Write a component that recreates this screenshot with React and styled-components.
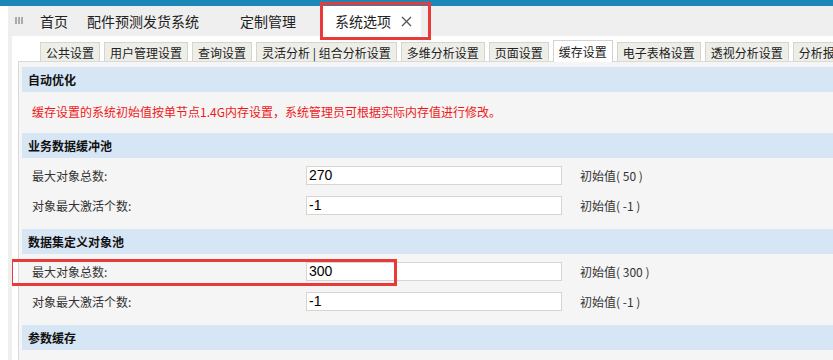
import React from 'react'
import styled, { createGlobalStyle } from 'styled-components'

const Global = createGlobalStyle`
  body {
    margin: 0;
    background: #fff;
    font-family: "Noto Sans CJK SC", "Noto Sans", sans-serif;
  }
`

const Page = styled.div`
  width: 833px;
  height: 360px;
  overflow: hidden;
  background: #fff;
  position: relative;
`

const BlueBar = styled.div`
  height: 6px;
  background: #1b87b7;
`

const Frame = styled.div`
  margin-left: 8px;
  background: #efefef;
  height: 354px;
  display: flex;
  flex-direction: column;
`

const TopTabs = styled.div`
  height: 30px;
  display: flex;
  align-items: stretch;
  flex-shrink: 0;
`

const Grip = styled.div`
  width: 22px;
  display: flex;
  align-items: center;
  justify-content: center;
`

const TopTab = styled.div`
  position: relative;
  width: ${p => p.$w}px;
  padding-left: ${p => (p.$active ? 14 : 10)}px;
  box-sizing: border-box;
  display: flex;
  align-items: center;
  font-size: 14px;
  color: #222;
  background: ${p => (p.$active ? '#fff' : 'transparent')};
  white-space: nowrap;
`

const Close = styled.span`
  margin-left: 10px;
  display: inline-flex;
`

const Mark = styled.div`
  position: absolute;
  border: 3px solid #e93a3a;
  box-sizing: border-box;
  pointer-events: none;
  z-index: 5;
`

const Content = styled.div`
  flex: 1;
  margin-left: 4px;
  background: #fff;
  display: flex;
  flex-direction: column;
  overflow: hidden;
`

const SubTabs = styled.div`
  height: 25px;
  display: flex;
  align-items: flex-end;
  gap: 4px;
  padding-left: 28px;
  flex-shrink: 0;
  white-space: pre;
`

const SubTab = styled.div`
  height: ${p => (p.$active ? 22 : 19)}px;
  box-sizing: border-box;
  padding: 0 5px;
  border: 1px solid ${p => (p.$active ? '#d2d2d2' : '#d6d4cc')};
  border-bottom: none;
  background: ${p => (p.$active ? '#fff' : '#eeeee9')};
  font-size: 12px;
  color: #222;
  display: flex;
  align-items: center;
  flex-shrink: 0;
  margin-bottom: ${p => (p.$active ? -1 : 0)}px;
  position: relative;
  z-index: 1;
`

const Panel = styled.div`
  flex: 1;
  margin-left: 6px;
  border-left: 1px solid #d9d9d9;
  border-top: 1px solid #d9d9d9;
  background: #f5f5f5;
  padding: 5px 0 0 3px;
`

const SectionHead = styled.div`
  height: 25px;
  background: #d6e6f5;
  padding-left: 6px;
  font-size: 12px;
  font-weight: bold;
  color: #111;
  display: flex;
  align-items: center;
`

const Notice = styled.div`
  height: 41px;
  box-sizing: border-box;
  padding: 0 0 3px 10px;
  display: flex;
  align-items: center;
  font-size: 12px;
  color: #f01818;
`

const SectionBody = styled.div`
  padding: 2px 0 9px;
`

const Row = styled.div`
  position: relative;
  height: 30px;
  display: flex;
  align-items: center;
  padding-left: 10px;
`

const Label = styled.div`
  width: 274px;
  font-size: 12px;
  color: #333;
`

const Input = styled.input`
  width: 256px;
  height: 19px;
  box-sizing: border-box;
  border: 1px solid #d8d5cf;
  background: #fff;
  padding: 0 2px;
  font-family: "Liberation Sans", Arial, sans-serif;
  font-size: 14px;
  color: #000;
  outline: none;
`

const Hint = styled.div`
  margin-left: 18px;
  font-size: 12px;
  color: #333;
`

const topTabs = [
  { label: '首页', w: 47 },
  { label: '配件预测发货系统', w: 153 },
  { label: '定制管理', w: 91 },
  { label: '系统选项', w: 100, active: true },
]

const subTabs = [
  '公共设置', '用户管理设置', '查询设置', '灵活分析 | 组合分析设置', '多维分析设置',
  '页面设置', '缓存设置', '电子表格设置', '透视分析设置', '分析报告设置',
]

const sections = [
  {
    title: '业务数据缓冲池',
    rows: [
      { label: '最大对象总数:', value: '270', init: '50' },
      { label: '对象最大激活个数:', value: '-1', init: '-1' },
    ],
  },
  {
    title: '数据集定义对象池',
    rows: [
      { label: '最大对象总数:', value: '300', init: '300', marked: true },
      { label: '对象最大激活个数:', value: '-1', init: '-1' },
    ],
  },
]

export default function App() {
  return (
    <Page>
      <Global />
      <BlueBar />
      <Frame>
        <TopTabs>
          <Grip>
            <svg width="8" height="8" viewBox="0 0 8 8">
              <path d="M1 0v7M4 0v7M7 0v7" stroke="#666" strokeWidth="1" />
            </svg>
          </Grip>
          {topTabs.map(t => (
            <TopTab key={t.label} $w={t.w} $active={t.active}>
              {t.label}
              {t.active && (
                <>
                  <Close>
                    <svg width="11" height="11" viewBox="0 0 11 11">
                      <path d="M1 1l9 9M10 1l-9 9" stroke="#555" strokeWidth="1.3" />
                    </svg>
                  </Close>
                  <Mark style={{ left: -1, top: -4, width: 111, height: 38 }} />
                </>
              )}
            </TopTab>
          ))}
        </TopTabs>
        <Content>
          <SubTabs>
            {subTabs.map(t => (
              <SubTab key={t} $active={t === '缓存设置'}>{t}</SubTab>
            ))}
          </SubTabs>
          <Panel>
            <SectionHead>自动优化</SectionHead>
            <Notice>缓存设置的系统初始值按单节点1.4G内存设置，系统管理员可根据实际内存值进行修改。</Notice>
            {sections.map(s => (
              <React.Fragment key={s.title}>
                <SectionHead>{s.title}</SectionHead>
                <SectionBody>
                  {s.rows.map(r => (
                    <Row key={r.label}>
                      <Label>{r.label}</Label>
                      <Input defaultValue={r.value} />
                      <Hint>初始值( {r.init} )</Hint>
                      {r.marked && <Mark style={{ left: -12, top: 3, width: 387, height: 27 }} />}
                    </Row>
                  ))}
                </SectionBody>
              </React.Fragment>
            ))}
            <SectionHead>参数缓存</SectionHead>
          </Panel>
        </Content>
      </Frame>
    </Page>
  )
}
